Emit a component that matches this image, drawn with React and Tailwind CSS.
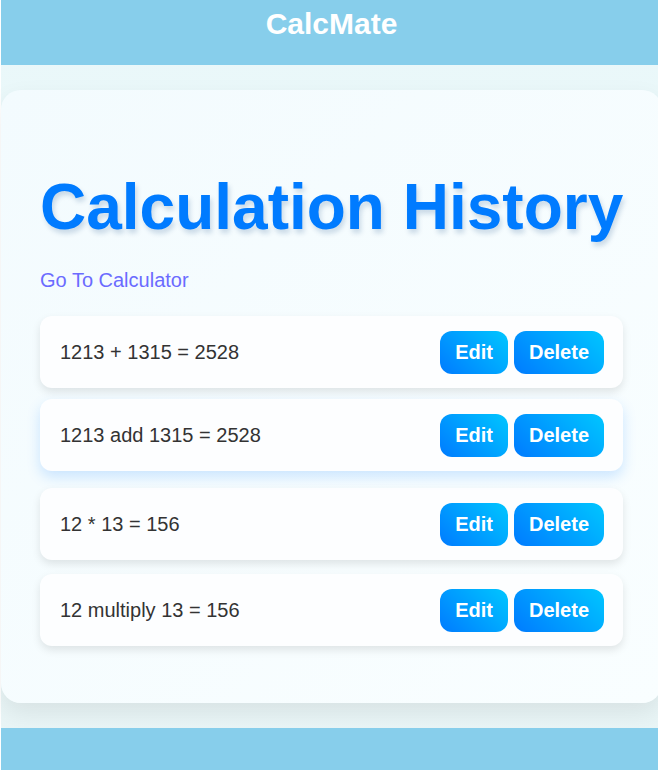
import React from "react";

const items = [
  { text: "1213 + 1315 = 2528", hover: false },
  { text: "1213 add 1315 = 2528", hover: true },
  { text: "12 * 13 = 156", hover: false },
  { text: "12 multiply 13 = 156", hover: false },
];

function Btn({ children }) {
  return (
    <button className="h-[43px] px-[15px] rounded-[12px] text-white font-bold text-[20px] leading-[23px] bg-[linear-gradient(45deg,#007bff,#00c6ff)]">
      {children}
    </button>
  );
}

export default function App() {
  return (
    <div className="min-h-screen w-full overflow-hidden bg-white pl-[1px] font-['Liberation_Sans',Arial,sans-serif]">
      <div className="min-h-screen bg-[linear-gradient(180deg,#eaf8fa,#e9f5f6)]">
        <header className="h-[65px] bg-[#87ceeb] flex justify-center pl-[4px]">
          <h1 className="pt-[6px] text-[30px] leading-[35px] font-bold text-white">CalcMate</h1>
        </header>
        <div className="pt-[25px] pb-[25px]">
          <div className="w-[661px] rounded-[20px] bg-[linear-gradient(135deg,#f3fbfe,#f9feff)] shadow-[0_10px_25px_rgba(0,0,0,0.08)] px-[39px] pt-[40px] pb-[57px]">
            <h2 className="mt-[40px] text-[64px] leading-[74px] font-bold text-[#007bff] [text-shadow:2px_4px_5px_rgba(0,60,120,0.18)] whitespace-nowrap">
              Calculation History
            </h2>
            <div className="mt-[25px] text-[20px] leading-[23px] text-[#6b6bff]">Go To Calculator</div>
            <div className="mt-[24px] w-[583px] flex flex-col gap-[14px]">
              {items.map((it, i) => (
                <div
                  key={i}
                  className={
                    "h-[72px] rounded-[12px] bg-[#fdfeff] pl-[20px] pr-[19px] flex items-center justify-between " +
                    (it.hover
                      ? "-translate-y-[3px] shadow-[0_6px_14px_rgba(0,123,255,0.18)]"
                      : "shadow-[0_4px_8px_rgba(0,0,0,0.1)]")
                  }
                >
                  <span className="text-[20px] text-[#333]">{it.text}</span>
                  <div className="flex gap-[6px]">
                    <Btn>Edit</Btn>
                    <Btn>Delete</Btn>
                  </div>
                </div>
              ))}
            </div>
          </div>
        </div>
        <footer className="h-[65px] bg-[#87ceeb]" />
      </div>
    </div>
  );
}
